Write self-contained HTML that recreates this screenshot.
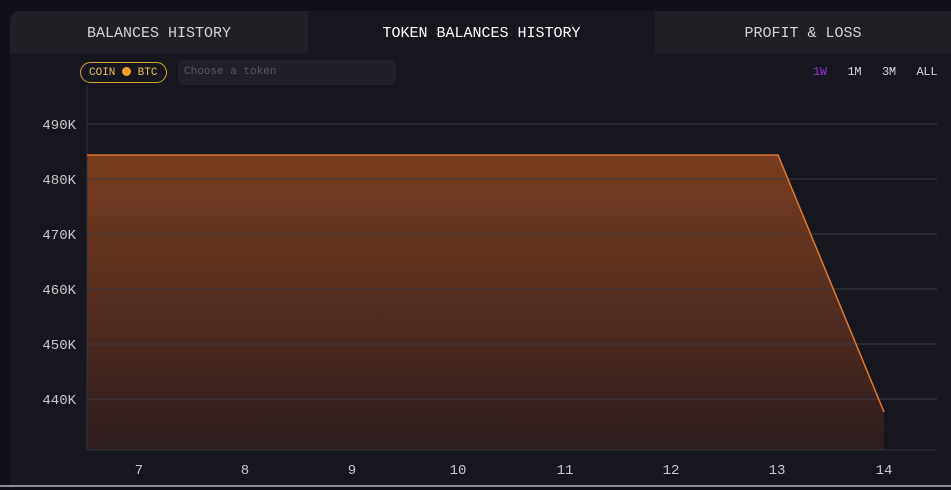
<!DOCTYPE html>
<html><head><style>
body{margin:0;width:951px;height:490px;background:#0e0f17;overflow:hidden;font-family:"Liberation Mono",monospace;}
.panel{position:absolute;left:10px;top:11px;width:941px;height:474px;background:#16161e;border-radius:10px 0 0 0;overflow:hidden;}
.tab{position:absolute;top:0;height:42px;line-height:45px;text-align:center;font-size:15px;color:#d4d4d8;}
.bl{position:absolute;left:0;right:0;top:485px;height:2px;background:#8c8c96;}
</style></head><body>
<div class="panel">
<div class="tab" style="left:0;width:298px;background:#1f1f26">BALANCES HISTORY</div>
<div class="tab" style="left:298px;width:347px;color:#fff">TOKEN BALANCES HISTORY</div>
<div class="tab" style="left:645px;width:296px;background:#1f1f26">PROFIT &amp; LOSS</div>
</div>
<div style="position:absolute;left:80px;top:62px;width:87px;height:21px;border:1px solid #d6a630;border-radius:11px;box-sizing:border-box;color:#e8c15a;font-size:11px;line-height:20px;padding-left:8px">COIN <span style="display:inline-block;width:9px;height:9px;border-radius:50%;background:#f0a02a;vertical-align:-1px"></span> BTC</div>
<div style="position:absolute;left:178px;top:60px;width:218px;height:25px;background:#202029;border-radius:6px;color:#5c5c66;font-size:11px;line-height:25px;padding-left:6px;box-sizing:border-box">Choose a token</div>
<div style="position:absolute;left:813px;top:65px;font-size:12px;color:#d4d4d8;letter-spacing:-0.3px"><span style="color:#9b30d9">1W</span>&nbsp;&nbsp;&nbsp;1M&nbsp;&nbsp;&nbsp;3M&nbsp;&nbsp;&nbsp;ALL</div>
<svg style="position:absolute;left:0;top:0" width="951" height="490">
<defs><linearGradient id="g" x1="0" y1="0" x2="0" y2="1"><stop offset="0" stop-color="#7a3d1f"/><stop offset="1" stop-color="#2c1d1f"/></linearGradient></defs>
<path d="M87 155 L778 155 L884 412 L884 450 L87 450 Z" fill="url(#g)"/>
<g stroke="#3a3a44" stroke-width="1">
<line x1="87" y1="124" x2="937" y2="124"/><line x1="87" y1="179" x2="937" y2="179"/><line x1="87" y1="234" x2="937" y2="234"/><line x1="87" y1="289" x2="937" y2="289"/><line x1="87" y1="344" x2="937" y2="344"/><line x1="87" y1="399" x2="937" y2="399"/>
</g>
<line x1="87" y1="85" x2="87" y2="450" stroke="#33333d"/>
<line x1="87" y1="450" x2="937" y2="450" stroke="#33333d"/>
<path d="M87 155 L778 155 L884 412" fill="none" stroke="#e07a30" stroke-width="1.5"/>
<g fill="#c8c8cc" font-family="Liberation Mono, monospace" font-size="14" text-anchor="end">
<text x="76" y="129">490K</text><text x="76" y="184">480K</text><text x="76" y="239">470K</text><text x="76" y="294">460K</text><text x="76" y="349">450K</text><text x="76" y="404">440K</text>
</g>
<g fill="#c8c8cc" font-family="Liberation Mono, monospace" font-size="14" text-anchor="middle">
<text x="139" y="474">7</text><text x="245" y="474">8</text><text x="352" y="474">9</text><text x="458" y="474">10</text><text x="565" y="474">11</text><text x="671" y="474">12</text><text x="777" y="474">13</text><text x="884" y="474">14</text>
</g>
</svg>
<div class="bl"></div>
</body></html>
